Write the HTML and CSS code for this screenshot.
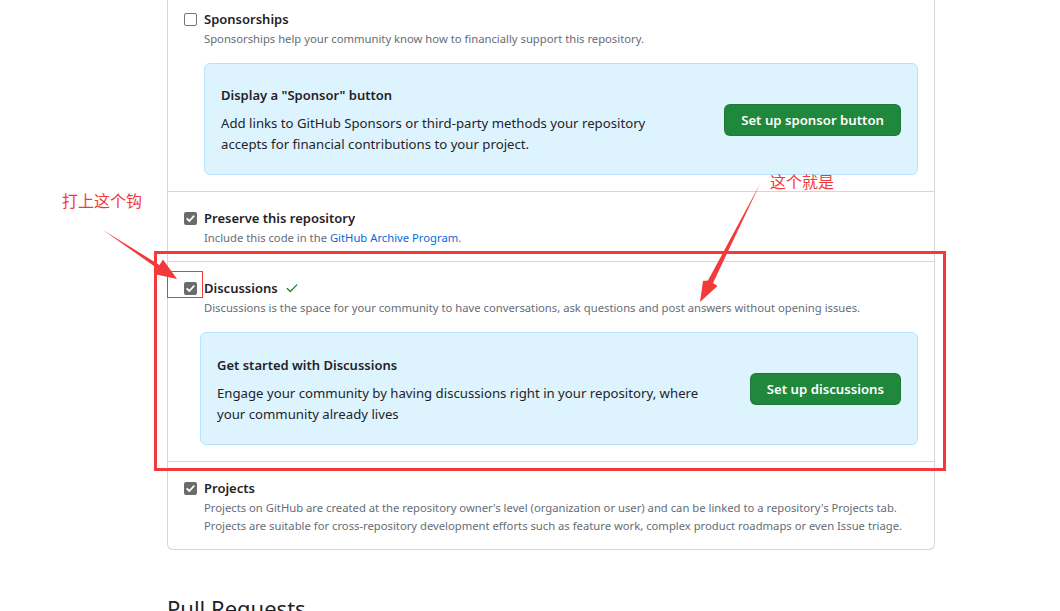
FILE: index.html
```html
<!DOCTYPE html>
<html lang="en">
<head>
<meta charset="utf-8">
<title>Features</title>
<link rel="stylesheet" href="styles.css">
</head>
<body>
<div class="page">
  <div class="panel">
    <section class="item item-first">
      <div class="item-head">
        <span class="cb"></span>
        <span class="item-title">Sponsorships</span>
      </div>
      <p class="item-desc">Sponsorships help your community know how to financially support this repository.</p>
      <div class="callout callout-first">
        <div class="callout-text">
          <h4 class="callout-title">Display a "Sponsor" button</h4>
          <p class="callout-body">Add links to GitHub Sponsors or third-party methods your repository<br>accepts for financial contributions to your project.</p>
        </div>
        <button class="btn-green">Set up sponsor button</button>
      </div>
    </section>
    <section class="item item-tight">
      <div class="item-head">
        <span class="cb cb-on"><svg viewBox="0 0 13 13" width="13" height="13"><path d="M3.2 6.8 5.4 9 9.8 4.2" fill="none" stroke="#fff" stroke-width="1.8" stroke-linecap="round" stroke-linejoin="round"/></svg></span>
        <span class="item-title">Preserve this repository</span>
      </div>
      <p class="item-desc">Include this code in the <a class="link" href="#">GitHub Archive Program</a>.</p>
    </section>
    <section class="item">
      <div class="item-head">
        <span class="cb cb-on"><svg viewBox="0 0 13 13" width="13" height="13"><path d="M3.2 6.8 5.4 9 9.8 4.2" fill="none" stroke="#fff" stroke-width="1.8" stroke-linecap="round" stroke-linejoin="round"/></svg></span>
        <span class="item-title">Discussions</span>
        <svg class="ok" viewBox="0 0 16 16" width="14" height="14"><path d="M2.5 8.6 6 12 13.5 4.5" fill="none" stroke="#1a7f37" stroke-width="1.4" stroke-linecap="round" stroke-linejoin="round"/></svg>
      </div>
      <p class="item-desc">Discussions is the space for your community to have conversations, ask questions and post answers without opening issues.</p>
      <div class="callout callout-wide">
        <div class="callout-text">
          <h4 class="callout-title">Get started with Discussions</h4>
          <p class="callout-body">Engage your community by having discussions right in your repository, where<br>your community already lives</p>
        </div>
        <button class="btn-green">Set up discussions</button>
      </div>
    </section>
    <section class="item item-last">
      <div class="item-head">
        <span class="cb cb-on"><svg viewBox="0 0 13 13" width="13" height="13"><path d="M3.2 6.8 5.4 9 9.8 4.2" fill="none" stroke="#fff" stroke-width="1.8" stroke-linecap="round" stroke-linejoin="round"/></svg></span>
        <span class="item-title">Projects</span>
      </div>
      <p class="item-desc">Projects on GitHub are created at the repository owner's level (organization or user) and can be linked to a repository's Projects tab.<br>Projects are suitable for cross-repository development efforts such as feature work, complex product roadmaps or even Issue triage.</p>
    </section>
  </div>
  <h2 class="section-heading">Pull Requests</h2>
</div>

<div class="annot">
  <svg class="annot-svg" viewBox="0 0 1060 611" width="1060" height="611">
    <rect x="155.5" y="252.5" width="789" height="217" fill="none" stroke="#f33a3a" stroke-width="3"/>
    <rect x="167.5" y="271.5" width="35" height="26" fill="none" stroke="#f33a3a" stroke-width="1"/>
    <polygon points="103,230 159.5,265 163,259.5 177,279 154,274 157.5,268.5" fill="#f33a3a"/>
    <polygon points="760,184 713,283 717.5,286 700,302 703,281 708,280.5" fill="#f33a3a"/>
  </svg>
  <span class="note note-a">打上这个钩</span>
  <span class="note note-b">这个就是</span>
</div>
</body>
</html>
```

FILE: styles.css
```css
* { box-sizing: border-box; }
html, body { margin: 0; padding: 0; background: #fff; }
body {
  font-family: "Noto Sans", "Liberation Sans", sans-serif;
  color: #1f2328;
  width: 1060px;
  height: 611px;
  overflow: hidden;
  position: relative;
}
.page {
  margin-left: 167px;
  width: 768px;
}
.panel {
  margin-top: -7px;
  border: 1px solid #d0d7de;
  border-top: none;
  border-radius: 0 0 6px 6px;
}
.item {
  padding: 16px 16px 16px 16px;
}
.item + .item { border-top: 1px solid #d0d7de; }
.item-tight { padding-bottom: 14px; }
.item-last { padding-bottom: 14px; }
.item-head {
  display: flex;
  align-items: center;
  height: 20px;
  gap: 7px;
}
.cb {
  width: 13px;
  height: 13px;
  border: 1px solid #767676;
  border-radius: 2px;
  background: #fff;
  display: block;
  flex: none;
}
.cb-on {
  border: none;
  background: #6b6b6b;
}
.cb svg { display: block; }
.item-title {
  font-size: 13px;
  font-weight: 600;
  line-height: 20px;
}
.ok { margin-left: 0; display: block; }
.item-desc {
  margin: 1px 0 0 20px;
  font-size: 11.25px;
  line-height: 18px;
  color: #656d76;
  white-space: nowrap;
}
.link { color: #0969da; text-decoration: none; }
.callout {
  margin: 16px 0 0 20px;
  height: 112px;
  border: 1px solid #b6e3ff;
  border-radius: 6px;
  background: #ddf4ff;
  display: flex;
  align-items: center;
  justify-content: space-between;
  padding: 1px 16px 0 16px;
}
.callout-first { margin-top: 15px; }
.callout-wide { margin-left: 16px; margin-top: 15px; height: 113px; }
.callout-title {
  margin: 0 0 7px 0;
  font-size: 13px;
  font-weight: 600;
  line-height: 22px;
}
.callout-body {
  margin: 0;
  font-size: 13.2px;
  line-height: 21px;
  color: #1f2328;
  white-space: nowrap;
}
.btn-green {
  height: 32px;
  padding: 0 16px;
  border: 1px solid rgba(31, 35, 40, 0.15);
  border-radius: 6px;
  background: #1f883d;
  color: #fff;
  font-family: inherit;
  font-size: 13.2px;
  font-weight: 600;
  white-space: nowrap;
}
.section-heading {
  margin: 40px 0 0 0;
  font-size: 22px;
  font-weight: 400;
  line-height: 36px;
}
.annot {
  position: absolute;
  left: 0;
  top: 0;
  width: 1060px;
  height: 611px;
  pointer-events: none;
}
.annot-svg { position: absolute; left: 0; top: 0; }
.note {
  position: absolute;
  color: #f33a3a;
  font-family: "Noto Sans CJK SC", sans-serif;
  font-size: 16px;
  line-height: 20px;
}
.note-a { left: 62px; top: 190px; }
.note-b { left: 770px; top: 171px; }
```
